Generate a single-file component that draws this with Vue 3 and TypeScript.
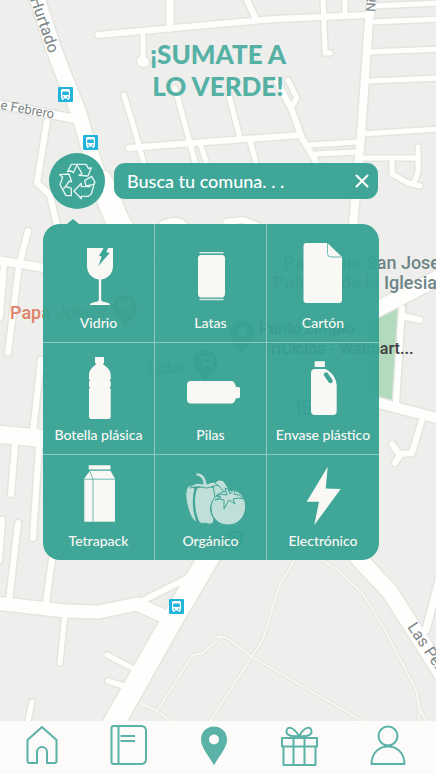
<script setup lang="ts">
import { ref } from 'vue'

type Tone = 'solid' | 'cut' | 'line' | 'whiteline' | 'soft' | 'handle'
interface Shape { d: string; tone: Tone }
interface Material { name: string; shapes: Shape[] }
interface Road { d: string; w: number }
interface Tab { name: string; width: number; d: string; filled?: boolean }

const query = ref('')

const materials: Material[] = [
  {
    name: 'Vidrio',
    shapes: [
      { tone: 'solid', d: 'M20 5H46V23C46 31 40 36 34.2 36.4V57.5C36 59.500 43 59 43 62H23C23 59 30 59.500 31.800 57.500V36.400C26 36 20 31 20 23Z' },
      { tone: 'cut', d: 'M37.300 4H41.700L39.300 9.300L42.700 10L31.300 23L34.700 13.500L32 12.700Z' },
    ],
  },
  {
    name: 'Latas',
    shapes: [
      { tone: 'solid', d: 'M21 12H44Q46 13 46 15V51Q46 53.500 44 54.500H21Q19 53.500 19 51V15Q19 13 21 12Z' },
      { tone: 'whiteline', d: 'M20.500 9.800H44.500M20.500 56.600H44.500' },
    ],
  },
  {
    name: 'Cartón',
    shapes: [
      { tone: 'solid', d: 'M15.500 0H36.500L51 14V57A3 3 0 0 1 48 60H15.500A3 3 0 0 1 12.500 57V3A3 3 0 0 1 15.500 0Z' },
      { tone: 'line', d: 'M36.500 0V10.500A3.500 3.500 0 0 0 40 14H51' },
    ],
  },
  {
    name: 'Botella plásica',
    shapes: [
      { tone: 'solid', d: 'M28 2H37V8H36.300V9.500C39 11.500 43.700 14.500 43.700 20V24L42.800 25.500L43.700 27V31L42.800 32.500L43.700 34V61.500Q43.700 64 41 64H24.700Q22 64 22 61.500V34L22.900 32.500L22 31V27L22.900 25.500L22 24V20C22 14.500 26.500 11.500 28.800 9.500V8H28Z' },
    ],
  },
  {
    name: 'Pilas',
    shapes: [
      { tone: 'solid', d: 'M12 26H53Q55.500 26.500 57 32H59.500Q61 32 61 33.500V41.500Q61 43.300 59.500 43.300H57Q55.500 48 53 48.500H12Q8 48.500 8 44.500V30Q8 26 12 26Z' },
    ],
  },
  {
    name: 'Envase plástico',
    shapes: [
      { tone: 'solid', d: 'M23.700 6.300H33.800V12H23.700ZM24 14H34C40 16 45.700 23 45.700 31V56Q45.700 60 42 60H24Q20 60 20 56V18Q20 14 24 14Z' },
      { tone: 'handle', d: 'M35 19.500L39.500 26' },
    ],
  },
  {
    name: 'Tetrapack',
    shapes: [
      { tone: 'solid', d: 'M21.700 4.300H43.400V8.500H21.700ZM23 9.800H43.400L48 17.500V60.800H17.300V17.500Z' },
      { tone: 'line', d: 'M17.300 18.200H48M26 18V61M22.500 10L26 18' },
    ],
  },
  {
    name: 'Orgánico',
    shapes: [
      { tone: 'soft', d: 'M12 24C6 26 6 34 8 43C10 53 14 60 18 61.500C14 50 13 38 16 28Z' },
      { tone: 'soft', d: 'M18 27C14 34 15 52 20 61C23 64 26 61 29 63C34 64 36 60 34 56C30 50 31 41 38 36C40 32 37 28 34 27C30 24 24 25 18 27Z' },
      { tone: 'soft', d: 'M34 24C40 22 46 26 48 31C43 31 39 33 36 36Z' },
      { tone: 'soft', d: 'M17 12C22 11 27 15 28 23C34 20 39 21 42 24C35 24 31 27 27 27C20 25 15 26 11 27C14 22 19 22 24 23C24 18 21 15 17 15Z' },
      { tone: 'soft', d: 'M36 22C38 18 44 18 46 22L50 28L45 31L40 25Z' },
      { tone: 'soft', d: 'M50 30C60 27 68 37 66.500 48C65 58 58 64 49 64C39 64 32.500 57 32 48C31.500 38 39 30 50 30Z' },
      { tone: 'soft', d: 'M37 35Q43 32 48 34L46 27L49 28L51 33L56 27L55 33Q61 33 65 38Q59 36 54 38L56 43L50 39L45 48L45 39Q41 37 36 39L42 36Z' },
    ],
  },
  {
    name: 'Electrónico',
    shapes: [{ tone: 'solid', d: 'M36.700 5.700L34.700 27.400L49.700 28L23.300 64L28 40.700H15.700Z' }],
  },
]

const roads: Road[] = [
  { w: 15, d: 'M36 -5L54 50L79 114L88 145L100 180' },
  { w: 23, d: 'M101 182L118 222L165 300' },
  { w: 8, d: 'M-4 104L76 119' },
  { w: 6, d: 'M47 121L37 183L50 195L57 226' },
  { w: 6, d: 'M98 35L218 24L275 19L368 15' },
  { w: 7, d: 'M170 -4V28' },
  { w: 5, d: 'M143 32V58' },
  { w: 10, d: 'M142 61L144 62' },
  { w: 6, d: 'M245 -4L256 19' },
  { w: 5, d: 'M323 -4L325 53L330 53' },
  { w: 5, d: 'M345 -4V14' },
  { w: 8, d: 'M373 -5L369 20L361 135L353 226L350 260' },
  { w: 5, d: 'M371 6L440 3M370 22L440 19M368 52L440 49M367 81L440 78M360 134L440 129' },
  { w: 5, d: 'M360 158H418M418 147V172L414 183' },
  { w: 5, d: 'M392 160V174L408 183L420 186' },
  { w: 6, d: 'M129 148L218 141L301 135' },
  { w: 5, d: 'M124 95L136 135L149 182M175 88L190 143L200 182M200 143L212 180M228 92L240 138M250 141L260 178' },
  { w: 6, d: 'M276 80L291 108L302 138L314 158L322 175' },
  { w: 5, d: 'M288 80L297 98L291 108' },
  { w: 5, d: 'M310 145L358 142M316 154L356 152' },
  { w: 6, d: 'M163 224Q178 217 185 226M226 222L243 220L258 226' },
  { w: 8, d: 'M-4 260L140 284' },
  { w: 6, d: 'M28 231L19 265L8 353M4 263L0 317' },
  { w: 17, d: 'M-4 434L60 440' },
  { w: 6, d: 'M41 360L33 432M15 446L11 494M39 446L33 538M18 523L9 601M2 520L-1 560' },
  { w: 6, d: 'M54 545L46 603' },
  { w: 13, d: 'M-4 603L65 611L98 612L137 604L170 619' },
  { w: 21, d: 'M240 505L212 552L172 620L110 730' },
  { w: 6, d: 'M142 601L188 578' },
  { w: 5, d: 'M65 614L60 663M107 655L136 670M108 681L130 688M32 702L27 726' },
  { w: 16, d: 'M345 540L360 560L390 592L444 677' },
  { w: 7, d: 'M439 580L426 630' },
  { w: 15, d: 'M360 318L440 277' },
  { w: 6, d: 'M402 308L396 404M402 316L420 320' },
  { w: 10, d: 'M310 380L379 403L440 419' },
  { w: 6, d: 'M422 420L412 453L399 454L392 444M400 455L395 463' },
]

const trails = [
  'M140 703L157 711L174 724M157 711L193 655L203 653L222 636',
  'M215 637Q224 636 230 640L252 657L368 724',
  'M208 724L251 658L263 639L280 584L296 558',
  'M318 558L338 570L363 594L385 630L416 690L420 712L417 724M421 711L427 724',
]

const stops = [
  [58, 87], [83, 135], [169, 599], [297, 400], [228, 531],
]

const tabs: Tab[] = [
  { name: 'Inicio', width: 32, d: 'M1.500 15L16 2L30.500 15V36Q30.500 38 28.500 38H21V27A5 5 0 0 0 11 27V38H3.500Q1.500 38 1.500 36Z' },
  { name: 'Guía', width: 37, d: 'M3.500 1H31Q36 1 36 6V34Q36 39 31 39H3.500Q1.500 39 1.500 37V3Q1.500 1 3.500 1ZM8.500 1V39M10.500 11H25M10.500 16H25' },
  { name: 'Mapa', width: 28, filled: true, d: 'M14 1.500C6.500 1.500 1 7 1 14.500C1 23.500 10 32 14 40.500C18 32 27 23.500 27 14.500C27 7 21.500 1.500 14 1.500ZM14 9.500A5 5 0 1 1 14 19.500A5 5 0 1 1 14 9.500Z' },
  { name: 'Premios', width: 38, d: 'M2 13H37V21.500H2ZM3.500 21.500H35.500V40H3.500ZM13.500 13V40M24.500 13V40M19 11C13 1 7 1 6.500 6C6 11 12 11.500 19 11C26 11.500 32 11 31.500 6C31 1 25 1 19 11Z' },
  { name: 'Perfil', width: 36, d: 'M18 1.500A9.500 9.500 0 1 1 18 20.500A9.500 9.500 0 1 1 18 1.500ZM1.500 39C1.500 28 9 21.500 18 21.500C27 21.500 34.500 28 34.500 39Z' },
]

const recycle = [
  'M29 28L40 7H58L46 32L39 27Z',
  'M58 7H84L92 20L100 17L90 42L63 40L72 35L59 12',
  'M80 56L101 43L111 61L107 67L84 72Z',
  'M109 64L100 96L91 103H70V110L48 87L70 64V74H96',
  'M5 38L33 36L41 60L34 57L23 73L40 79V101H24L6 68L14 46Z',
  'M23 73L17 80',
]
</script>

<template>
  <div class="screen">
    <svg class="map" viewBox="0 0 436 774" preserveAspectRatio="xMidYMin slice" aria-hidden="true">
      <path class="park" d="M370 318L407 300L400 404L370 396Z" />
      <path v-for="(t, i) in trails" :key="'tc' + i" class="trail-edge" :d="t" />
      <path v-for="(t, i) in trails" :key="'t' + i" class="trail" :d="t" />
      <path v-for="(r, i) in roads" :key="'c' + i" class="road-edge" :d="r.d" :stroke-width="r.w + 3" />
      <path v-for="(r, i) in roads" :key="'r' + i" class="road" :d="r.d" :stroke-width="r.w" />

      <g class="street">
        <text transform="translate(30 -1) rotate(71)" font-size="16">Hurtado</text>
        <text transform="translate(0 109) rotate(10)" font-size="13">e Febrero</text>
        <text transform="translate(375 12) rotate(-86)" font-size="13">Ni</text>
        <text transform="translate(407 627) rotate(56)" font-size="16">Las Perdices</text>
      </g>
      <text class="food" x="10" y="319">Papa John's</text>
      <g class="place">
        <text x="440" y="269" text-anchor="end">Parroquia San Jose</text>
        <text x="437" y="289" text-anchor="end">Patrono de la Iglesia</text>
      </g>
      <g class="poi">
        <text x="259" y="334">Punto Limpio</text>
        <text x="262" y="354">TriCiclos - Walmart...</text>
      </g>
      <text class="shop" x="148" y="374">Lider</text>
      <path class="pin-food" d="M125 328C121 320 113 317 113 307A12 12 0 0 1 137 307C137 317 129 320 125 328Z" />
      <path class="pin-mark" d="M119 300V305Q119 308 122 308V315M122 300V308M125 300V305Q125 308 122 308M130 315V300Q127 303 128 308H130" />
      <path class="pin-poi" d="M242 354C238 348 230 343 230 333A12 12 0 0 1 254 333C254 343 246 348 242 354Z" />
      <circle class="pin-dot" cx="242" cy="332" r="5" />
      <path class="pin-shop" d="M205 382C201 374 193 371 193 362A12 12 0 0 1 217 362C217 371 209 374 205 382Z" />
      <path class="pin-mark" d="M198 356H201L203 364H211L213 358H202M204 368H205M210 368H211" />
      <g v-for="(s, i) in stops" :key="'s' + i" :transform="`translate(${s[0]} ${s[1]})`">
        <rect class="stop" width="15" height="15" rx="1" />
        <path class="bus" d="M4.500 2H10.500Q12 2 12 3.500V11.500H11V13H9.500V11.500H5.500V13H4V11.500H3V3.500Q3 2 4.500 2Z" />
        <path class="stop" d="M4.200 4.500H10.800V8H4.200ZM4.500 9.500H6V10.700H4.500ZM9 9.500H10.500V10.700H9Z" />
      </g>
    </svg>

    <main class="content">
      <h1 class="title">¡SUMATE A<br />LO VERDE!</h1>

      <form class="search" @submit.prevent>
        <button class="badge" type="submit" aria-label="Buscar">
          <svg viewBox="0 0 114 114" aria-hidden="true">
            <path v-for="(d, i) in recycle" :key="i" :d="d" />
          </svg>
        </button>
        <div class="field">
          <input v-model="query" type="text" placeholder="Busca tu comuna. . ." aria-label="Comuna" />
          <button class="clear" type="button" aria-label="Borrar" @click="query = ''">
            <svg viewBox="0 0 14 14" aria-hidden="true"><path d="M1.500 1.500L12.500 12.500M12.500 1.500L1.500 12.500" /></svg>
          </button>
        </div>
      </form>

      <section class="panel">
        <button v-for="m in materials" :key="m.name" class="cell" type="button">
          <svg class="icon" viewBox="0 0 64 64" aria-hidden="true">
            <path v-for="(s, i) in m.shapes" :key="i" :class="s.tone" :d="s.d" />
          </svg>
          <span>{{ m.name }}</span>
        </button>
      </section>
    </main>

    <nav class="tabs">
      <a v-for="t in tabs" :key="t.name" href="#" :aria-label="t.name">
        <svg :viewBox="`0 0 ${t.width} 42`" :width="t.width" height="42" :class="{ filled: t.filled }" aria-hidden="true">
          <path :d="t.d" fill-rule="evenodd" />
        </svg>
      </a>
    </nav>
  </div>
</template>

<style>
body {
  margin: 0;
  background: #eeeeed;
}
</style>

<style scoped>
.screen {
  position: relative;
  display: flex;
  flex-direction: column;
  min-height: 100vh;
  overflow: hidden;
  background: #eeeeed;
  font-family: Lato, "Liberation Sans", sans-serif;
}

.map {
  position: absolute;
  inset: 0;
  width: 100%;
  height: 100%;
  font-family: Roboto, sans-serif;
}
.park { fill: #b2dbbd; }
.road, .road-edge, .trail, .trail-edge {
  fill: none;
  stroke-linecap: round;
  stroke-linejoin: round;
}
.road-edge { stroke: #e4e4e1; }
.road { stroke: #fefefd; }
.trail-edge { stroke: #e5e5e1; stroke-width: 4; }
.trail { stroke: #f7f7f3; stroke-width: 2; }
.street { fill: #7b8587; }
.food { fill: #df8268; font-size: 18px; font-weight: 500; }
.place { fill: #6f8587; font-size: 18px; font-weight: 500; }
.poi { fill: #454545; font-size: 16px; font-weight: 600; }
.shop { fill: #3f7fb0; font-size: 17px; font-weight: 500; }
.pin-food { fill: #c77a5c; }
.pin-poi { fill: #777777; }
.pin-shop { fill: #2a79b8; }
.pin-mark { fill: none; stroke: #ffffff; stroke-width: 2; }
.pin-dot { fill: #ffffff; }
.stop { fill: #20b4dc; }
.bus { fill: #ffffff; }

.content {
  position: relative;
  display: flex;
  flex-direction: column;
  padding: 38px 57px 24px 43px;
}

.title {
  margin: 0 0 51px 14px;
  color: #56b1a5;
  font-size: 26px;
  font-weight: 900;
  line-height: 32px;
  text-align: center;
}

.search {
  display: flex;
  align-items: center;
  gap: 9px;
  margin: 0 0 15px 6px;
}
.badge {
  flex: none;
  display: grid;
  place-items: center;
  width: 56px;
  height: 56px;
  padding: 0;
  border: 0;
  border-radius: 50%;
  background: #3ea597;
}
.badge svg {
  width: 38px;
  height: 38px;
  fill: none;
  stroke: #e6f4f1;
  stroke-width: 4;
  stroke-linejoin: round;
  stroke-linecap: round;
}
.field {
  flex: 1;
  display: flex;
  align-items: center;
  min-width: 0;
  height: 36px;
  margin-right: 1px;
  padding: 0 9px 0 13px;
  border-radius: 11px;
  background: rgba(56, 162, 147, 0.96);
}
.field input {
  flex: 1;
  min-width: 0;
  height: 36px;
  padding: 0;
  border: 0;
  outline: 0;
  background: transparent;
  color: #ffffff;
  font: 500 18px/36px Lato, "Liberation Sans", sans-serif;
}
.field input::placeholder {
  color: #ffffff;
  opacity: 1;
}
.clear {
  flex: none;
  display: grid;
  padding: 0;
  border: 0;
  background: none;
}
.clear svg {
  width: 14px;
  height: 14px;
  fill: none;
  stroke: #ffffff;
  stroke-width: 2;
  stroke-linecap: round;
}

.panel {
  position: relative;
  display: grid;
  grid-template-columns: repeat(3, 1fr);
  grid-template-rows: minmax(119px, auto) minmax(112px, auto) minmax(105px, auto);
  border-radius: 17px;
  background: rgba(56, 162, 147, 0.96);
}
.panel::before {
  content: "";
  position: absolute;
  top: -5px;
  left: 24px;
  border: solid transparent;
  border-width: 0 6px 5px;
  border-bottom-color: #3ea597;
}
.cell {
  display: flex;
  flex-direction: column;
  align-items: center;
  justify-content: flex-end;
  gap: 6px;
  min-width: 0;
  padding: 0 0 9px;
  border: solid #8bc8be;
  border-width: 0 0 1px 0;
  background: none;
  color: #f9f8f5;
  font: 500 14px/20px Lato, "Liberation Sans", sans-serif;
  white-space: nowrap;
}
.cell:not(:nth-child(3n)) { border-right-width: 1px; }
.cell:nth-child(n + 7) { border-bottom-width: 0; }

.icon {
  width: 64px;
  height: 64px;
  overflow: visible;
}
.solid { fill: #f9f8f5; }
.cut { fill: #3ea597; }
.line { fill: none; stroke: #6fbcb1; stroke-width: 1; }
.whiteline { fill: none; stroke: #d6ebe6; stroke-width: 1.5; }
.handle { fill: none; stroke: #3ea597; stroke-width: 4.5; stroke-linecap: round; }
.soft { fill: #bfdfd8; stroke: #3ea597; stroke-width: 1; stroke-linejoin: round; }

.tabs {
  position: relative;
  display: flex;
  align-items: flex-start;
  justify-content: space-between;
  box-sizing: border-box;
  height: 53px;
  margin-top: auto;
  padding: 4px 30px 0 26px;
  background: #fdfbf9;
}
.tabs svg {
  display: block;
  fill: none;
  stroke: #5bb2a6;
  stroke-width: 2;
  stroke-linejoin: round;
}
.tabs .filled {
  fill: #5bb2a6;
  stroke: none;
}
</style>
